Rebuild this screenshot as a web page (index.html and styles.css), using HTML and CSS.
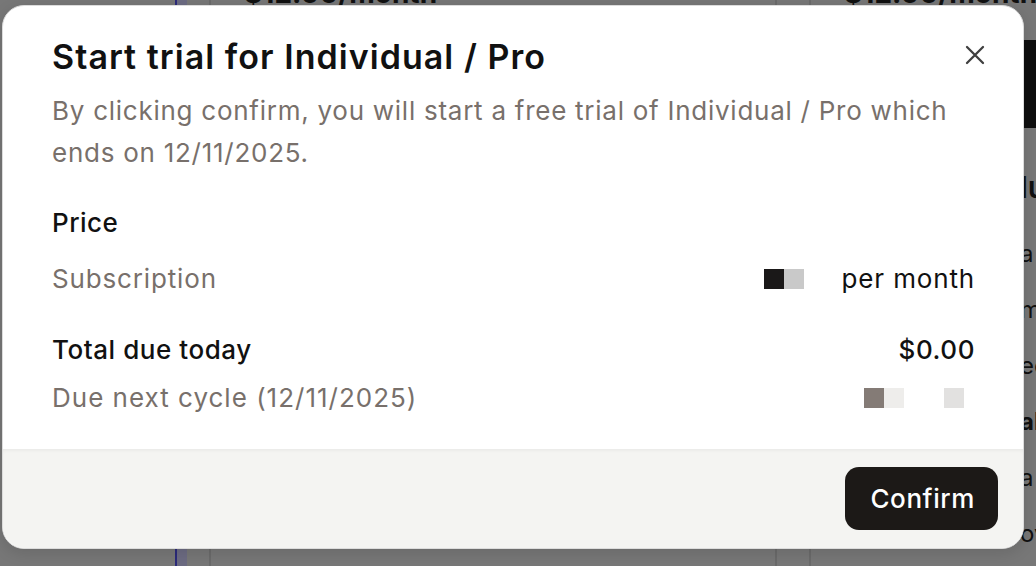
FILE: index.html
```html
<!DOCTYPE html>
<html lang="en">
<head>
<meta charset="utf-8">
<title>Start trial</title>
<link rel="stylesheet" href="styles.css">
</head>
<body>
<div class="backdrop">
  <div class="bg-line bg-line-blue"></div>
  <div class="bg-line bg-line-a"></div>
  <div class="bg-line bg-line-b"></div>
  <div class="bg-line bg-line-c"></div>
  <div class="bg-top bg-top-1">$12.00/month</div>
  <div class="bg-top bg-top-2">$12.00/month</div>
  <div class="bg-bar"></div>
  <div class="bg-col">
    <div class="bg-head">lu</div>
    <div>a</div>
    <div>m</div>
    <div>ec</div>
    <div class="bg-bold">al</div>
    <div>a</div>
    <div>ov</div>
  </div>
</div>

<div class="modal" role="dialog" aria-labelledby="modal-title">
  <div class="modal-body">
    <div class="modal-head">
      <h1 id="modal-title" class="modal-title">Start trial for Individual / Pro</h1>
      <button class="close-btn" aria-label="Close">
        <svg width="20" height="20" viewBox="0 0 20 20" fill="none" stroke="#3f3f3f" stroke-width="2.3" stroke-linecap="round">
          <path d="M2 2 L18 18 M18 2 L2 18"/>
        </svg>
      </button>
    </div>
    <p class="modal-desc">By clicking confirm, you will start a free trial of Individual / Pro which ends on 12/11/2025.</p>

    <div class="section">
      <div class="row row-label">Price</div>
      <div class="row row-muted">
        <span>Subscription</span>
        <span class="amount">
          <span class="blocks"><i class="b-dark"></i><i class="b-light"></i></span>
          <span class="per">per month</span>
        </span>
      </div>
    </div>

    <div class="section section-total">
      <div class="row row-strong">
        <span>Total due today</span>
        <span>$0.00</span>
      </div>
      <div class="row row-muted row-next">
        <span>Due next cycle (12/11/2025)</span>
        <span class="blocks blocks-next"><i class="b-warm"></i><i class="b-pale"></i><i class="b-gap"></i><i class="b-pale2"></i></span>
      </div>
    </div>
  </div>
  <div class="modal-footer">
    <button class="confirm-btn">Confirm</button>
  </div>
</div>
</body>
</html>
```

FILE: styles.css
```css
* { box-sizing: border-box; }

html, body {
  margin: 0;
  padding: 0;
  width: 1036px;
  height: 566px;
  overflow: hidden;
}

body {
  background: #777777;
  font-family: Inter, "Noto Sans", "Liberation Sans", sans-serif;
  position: relative;
}

/* dimmed page behind the dialog */
.backdrop {
  position: absolute;
  inset: 0;
  overflow: hidden;
}
.bg-line {
  position: absolute;
  top: 0;
  bottom: 0;
  width: 2px;
  background: #6a6a6a;
}
.bg-line-blue {
  left: 175px;
  width: 12px;
  background: #6c6b82;
  border-left: 2px solid #2b2a7a;
}
.bg-line-a { left: 209px; }
.bg-line-b { left: 775px; }
.bg-line-c { left: 809px; }
.bg-top {
  position: absolute;
  top: -24px;
  font-size: 28px;
  font-weight: 700;
  color: #111;
}
.bg-top-1 { left: 244px; }
.bg-top-2 { left: 844px; }
.bg-bar {
  position: absolute;
  left: 1000px;
  top: 40px;
  width: 40px;
  height: 88px;
  background: #0e0e0e;
}
.bg-col {
  position: absolute;
  left: 1020px;
  top: 173px;
  display: flex;
  flex-direction: column;
  gap: 28px;
  font-size: 24px;
  line-height: 28px;
  color: #111;
}
.bg-head { font-size: 30px; font-weight: 600; margin-bottom: 11px; }
.bg-bold { font-weight: 700; }

/* dialog */
.modal {
  position: absolute;
  left: 2px;
  top: 5px;
  width: 1022px;
  height: 544px;
  background: #ffffff;
  border: 1px solid #dcdcdc;
  border-radius: 22px;
  overflow: hidden;
  display: flex;
  flex-direction: column;
  box-shadow: 0 4px 16px rgba(0,0,0,0.12);
}

.modal-body {
  flex: 1;
  padding: 29px 48px 0 49px;
  display: flex;
  flex-direction: column;
}

.modal-head {
  display: flex;
  justify-content: space-between;
  align-items: center;
}

.modal-title {
  margin: 0;
  font-size: 34px;
  line-height: 44px;
  font-weight: 600;
  color: #111111;
  letter-spacing: 1.05px;
}

.close-btn {
  border: 0;
  background: transparent;
  padding: 0;
  margin-right: -10px;
  margin-top: -4px;
  width: 20px;
  height: 20px;
  display: flex;
  align-items: center;
  justify-content: center;
  cursor: pointer;
}

.modal-desc {
  margin: 11px 0 0 0;
  font-size: 26px;
  line-height: 42px;
  color: #78706b;
  letter-spacing: 0.74px;
}

.section {
  margin-top: 31px;
  display: flex;
  flex-direction: column;
}

.section-total { margin-top: 35px; }

.row {
  display: flex;
  justify-content: space-between;
  align-items: center;
  font-size: 26px;
  line-height: 36px;
  letter-spacing: 0.85px;
}
.row-label { color: #111; font-weight: 500; letter-spacing: 0.5px; }
.row-muted { color: #78706b; margin-top: 20px; }
.row-strong { color: #111; font-weight: 500; letter-spacing: 0.55px; }
.row-next { margin-top: 12px; letter-spacing: 1px; }

.amount {
  display: flex;
  align-items: center;
}
.per { color: #111; margin-left: 38px; }

.blocks {
  display: flex;
}
.blocks i {
  display: block;
  width: 20px;
  height: 20px;
}
.b-dark { background: #1a1818; }
.b-light { background: #c9c9c9; }
.b-warm { background: #847b76; }
.b-pale { background: #eeedeb; }
.b-gap { background: transparent; width: 40px !important; }
.b-pale2 { background: #e2e1e0; }
.blocks-next { margin-right: 11px; }

.modal-footer {
  height: 99px;
  background: #f4f4f2;
  box-shadow: inset 0 3px 4px -2px rgba(0,0,0,0.06);
  display: flex;
  justify-content: flex-end;
  align-items: center;
  padding: 0 25px;
}

.confirm-btn {
  border: 0;
  background: #1c1917;
  color: #ffffff;
  font-family: Inter, "Noto Sans", "Liberation Sans", sans-serif;
  font-size: 26px;
  font-weight: 500;
  letter-spacing: 0.6px;
  height: 63px;
  padding: 0 23px 0 25px;
  border-radius: 14px;
  cursor: pointer;
}
```
